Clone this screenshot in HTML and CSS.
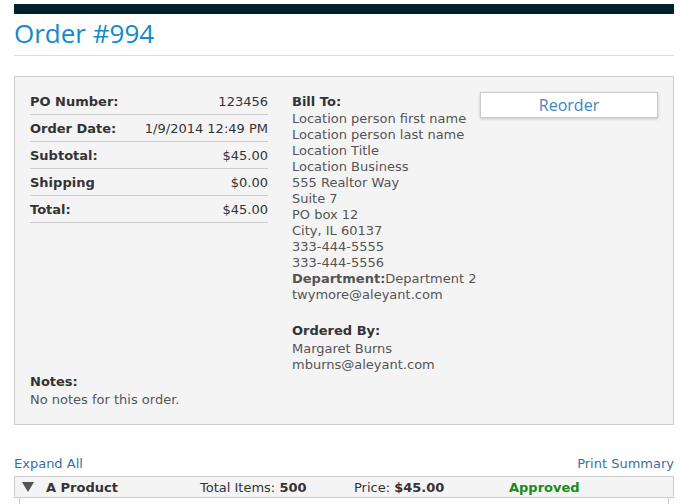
FILE: index.html
```html
<!DOCTYPE html>
<html lang="en">
<head>
    <meta charset="UTF-8">
    <title>Order #994</title>
    <link rel="stylesheet" href="styles.css">
</head>
<body>
    <div class="page">
        <div class="topbar"></div>
        <h1 class="title">Order #994</h1>

        <div class="summary">
            <div class="summary-main">
                <table class="totals">
                    <tr><th>PO Number:</th><td>123456</td></tr>
                    <tr><th>Order Date:</th><td>1/9/2014 12:49 PM</td></tr>
                    <tr><th>Subtotal:</th><td>$45.00</td></tr>
                    <tr><th>Shipping</th><td>$0.00</td></tr>
                    <tr><th>Total:</th><td>$45.00</td></tr>
                </table>

                <div class="address">
                    <strong>Bill To:</strong>
                    <div>Location person first name</div>
                    <div>Location person last name</div>
                    <div>Location Title</div>
                    <div>Location Business</div>
                    <div>555 Realtor Way</div>
                    <div>Suite 7</div>
                    <div>PO box 12</div>
                    <div>City, IL 60137</div>
                    <div>333-444-5555</div>
                    <div>333-444-5556</div>
                    <div><b class="label">Department:</b>Department 2</div>
                    <div>twymore@aleyant.com</div>

                    <strong class="ordered">Ordered By:</strong>
                    <div>Margaret Burns</div>
                    <div>mburns@aleyant.com</div>
                </div>

                <div class="actions">
                    <button class="reorder">Reorder</button>
                </div>
            </div>

            <div class="notes">
                <strong>Notes:</strong>
                <div>No notes for this order.</div>
            </div>
        </div>

        <div class="list-links">
            <a href="#">Expand All</a>
            <a href="#">Print Summary</a>
        </div>

        <div class="product">
            <div class="product-head">
                <span class="arrow"></span>
                <span class="name">A Product</span>
                <span class="items">Total Items: <b>500</b></span>
                <span class="price">Price: <b>$45.00</b></span>
                <span class="status">Approved</span>
            </div>
            <div class="product-body"></div>
        </div>
    </div>
</body>
</html>
```

FILE: styles.css
```css
body {
    margin: 0;
    font-family: "DejaVu Sans", Verdana, sans-serif;
    font-size: 13px;
    color: #555;
    background: #fff;
}
.page {
    width: 660px;
    margin-left: 14px;
    padding-top: 4px;
}
.topbar {
    height: 10px;
    background-color: #012131;
}
.title {
    margin: 0;
    padding: 4px 0 6px;
    font-family: "Open Sans", "Noto Sans", sans-serif;
    font-weight: normal;
    font-size: 26px;
    line-height: 31px;
    color: #1589cc;
    border-bottom: 1px solid #ddd;
}
.summary {
    margin-top: 20px;
    background: #f4f4f4;
    border: 1px solid #ccc;
    padding: 11px 15px 15px;
}
.summary-main {
    display: flex;
    align-items: flex-start;
}
.totals {
    width: 238px;
    border-collapse: collapse;
    color: #333;
}
.totals th, .totals td {
    height: 26px;
    padding: 0;
    border-bottom: 1px solid #ccc;
}
.totals th {
    text-align: left;
    font-weight: bold;
}
.totals td {
    text-align: right;
}
.address {
    margin-left: 24px;
    width: 188px;
    line-height: 16px;
    padding-top: 6px;
}
.address strong {
    display: block;
    margin-bottom: 1px;
    color: #333;
}
.address .label {
    color: #555;
}
.address .ordered {
    margin-top: 20px;
    margin-bottom: 2px;
}
.actions {
    flex: 1;
    padding-top: 4px;
}
.reorder {
    width: 178px;
    height: 26px;
    background: #fff;
    border: 1px solid #ccc;
    box-shadow: 0 1px 3px rgba(0,0,0,0.2);
    font-family: "Open Sans", "Noto Sans", sans-serif;
    font-size: 16px;
    color: #3a87bf;
    padding: 0;
}
.notes {
    line-height: 18px;
}
.notes strong {
    display: block;
    color: #333;
}
.list-links {
    display: flex;
    justify-content: space-between;
    margin-top: 31px;
    line-height: 16px;
}
.list-links a {
    color: #3a6f9f;
    text-decoration: none;
}
.product {
    margin-top: 4px;
}
.product-head {
    display: flex;
    align-items: center;
    height: 20px;
    background: #f4f4f4;
    border: 1px solid #ccc;
    color: #333;
}
.arrow {
    width: 0;
    height: 0;
    margin-left: 7px;
    border-left: 6px solid transparent;
    border-right: 6px solid transparent;
    border-top: 10px solid #555;
}
.name {
    margin-left: 12px;
    width: 154px;
    font-weight: bold;
}
.items {
    width: 154px;
}
.price {
    width: 155px;
}
.status {
    font-weight: bold;
    color: #1a8a1a;
}
.product-body {
    height: 10px;
    margin: 0 5px;
    border-left: 1px solid #ccc;
    border-right: 1px solid #ccc;
}
```
